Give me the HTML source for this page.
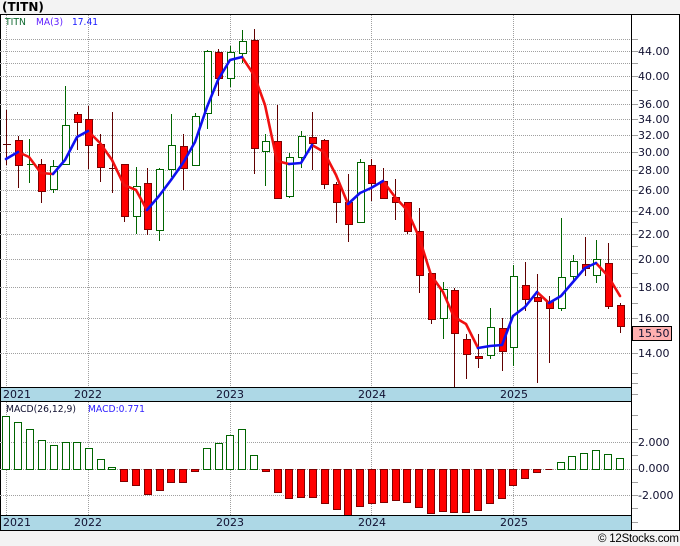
<!DOCTYPE html>
<html><head><meta charset="utf-8"><style>
html,body{margin:0;padding:0;background:#f3f3f3}
svg{display:block}
text{font-family:"DejaVu Sans","Liberation Sans",sans-serif;font-size:11px;fill:#101030}
.s{font-size:9.5px}
.g{fill:none;stroke:#a0a0a0;stroke-width:1;stroke-dasharray:1 1;shape-rendering:crispEdges}
</style></head><body>
<svg width="680" height="546" viewBox="0 0 680 546" xmlns="http://www.w3.org/2000/svg">
<rect width="680" height="546" fill="#f3f3f3"/>
<rect x="0" y="14" width="680" height="517" fill="#fff"/>
<!-- year bars -->
<rect x="1" y="388" width="630" height="13" fill="#add8e6"/>
<rect x="1" y="516" width="630" height="14" fill="#add8e6"/>
<!-- grid -->
<path class="g" d="M1 39.5H631M1 51.5H631M1 63.5H631M1 76.5H631M1 90.5H631M1 104.5H631M1 119.5H631M1 135.5H631M1 152.5H631M1 170.5H631M1 190.5H631M1 211.5H631M1 234.5H631M1 259.5H631M1 287.5H631M1 318.5H631M1 353.5H631M1 442.5H631M1 469.5H631M1 495.5H631"/>
<path class="g" d="M6.5 15V387M88.5 15V387M230.5 15V387M371.5 15V387M513.5 15V387M6.5 402V515M88.5 402V515M230.5 402V515M371.5 402V515M513.5 402V515"/>
<!-- ticks -->
<path fill="none" stroke="#a0a0a0" shape-rendering="crispEdges" d="M632 39.5h6M632 51.5h6M632 63.5h6M632 76.5h6M632 90.5h6M632 104.5h6M632 119.5h6M632 135.5h6M632 152.5h6M632 170.5h6M632 190.5h6M632 211.5h6M632 222.5h6M632 234.5h6M632 246.5h6M632 259.5h6M632 273.5h6M632 287.5h6M632 303.5h6M632 318.5h6M632 340.5h6M632 353.5h6M632 373.5h6M632 383.5h6M632 394.5h6M632 415.5h6M632 429.5h6M632 442.5h6M632 455.5h6M632 469.5h6M632 482.5h6M632 495.5h6M632 508.5h6M632 522.5h6"/>
<!-- wicks -->
<path fill="none" stroke="#600000" shape-rendering="crispEdges" d="M6.5 110V165M18.5 136V188M41.5 159V203M77.5 112V150M88.5 106V169M100.5 134V182M112.5 112V193M124.5 164V222M147.5 168V235M183.5 134V190M218.5 49V96M254.5 29V174M277.5 105V199M312.5 112V170M324.5 139V189M336.5 182V223M348.5 174V242M371.5 159V201M383.5 168V198M395.5 179V220M407.5 202V234M419.5 208V293M431.5 273V324M454.5 288V387M466.5 334V379M478.5 334V368M502.5 318V371M525.5 262V311M537.5 274V383M549.5 296V363M585.5 237V276M608.5 243V309M620.5 303V333M3 144.5h8M109 168.5h7"/>
<path fill="none" stroke="#006400" shape-rendering="crispEdges" d="M29.5 139V183M53.5 160V193M65.5 86V165M136.5 167V234M159.5 168V241M171.5 114V177M195.5 113V166M207.5 50V129M230.5 46V87M242.5 30V63M265.5 134V186M289.5 153V198M301.5 131V168M360.5 159V222M443.5 282V339M490.5 308V359M513.5 265V366M561.5 218V311M573.5 255V280M596.5 240V283M27 164.5h7"/>
<!-- green bodies -->
<path fill="#fff" stroke="#006400" shape-rendering="crispEdges" d="M50.5 166.5h7V189.5h-7zM62.5 125.5h7V164.5h-7zM133.5 186.5h7V216.5h-7zM156.5 169.5h7V230.5h-7zM168.5 145.5h7V169.5h-7zM192.5 116.5h7V165.5h-7zM204.5 51.5h7V113.5h-7zM227.5 52.5h7V78.5h-7zM239.5 41.5h7V53.5h-7zM262.5 141.5h7V151.5h-7zM286.5 157.5h7V196.5h-7zM298.5 136.5h7V157.5h-7zM357.5 162.5h7V222.5h-7zM440.5 289.5h7V318.5h-7zM487.5 327.5h7V355.5h-7zM510.5 276.5h7V347.5h-7zM558.5 277.5h7V308.5h-7zM570.5 261.5h7V276.5h-7zM593.5 259.5h7V275.5h-7z"/>
<!-- red bodies -->
<path fill="#f00" stroke="#800000" shape-rendering="crispEdges" d="M15.5 140.5h7V165.5h-7zM38.5 164.5h7V191.5h-7zM74.5 114.5h7V122.5h-7zM85.5 119.5h7V145.5h-7zM97.5 144.5h7V167.5h-7zM121.5 164.5h7V216.5h-7zM144.5 183.5h7V229.5h-7zM180.5 146.5h7V168.5h-7zM215.5 52.5h7V78.5h-7zM251.5 40.5h7V148.5h-7zM274.5 141.5h7V198.5h-7zM309.5 137.5h7V143.5h-7zM321.5 140.5h7V184.5h-7zM333.5 184.5h7V202.5h-7zM345.5 202.5h7V224.5h-7zM368.5 165.5h7V183.5h-7zM380.5 181.5h7V198.5h-7zM392.5 197.5h7V202.5h-7zM404.5 202.5h7V231.5h-7zM416.5 231.5h7V275.5h-7zM428.5 273.5h7V319.5h-7zM451.5 290.5h7V333.5h-7zM463.5 339.5h7V354.5h-7zM475.5 356.5h7V358.5h-7zM499.5 328.5h7V351.5h-7zM522.5 285.5h7V299.5h-7zM534.5 297.5h7V301.5h-7zM546.5 301.5h7V308.5h-7zM582.5 264.5h7V268.5h-7zM605.5 263.5h7V306.5h-7zM617.5 305.5h7V326.5h-7z"/>
<!-- MA line -->
<g fill="none" stroke-width="2.6" stroke-linejoin="round" stroke-linecap="round">
<g stroke="#f01010">
<path d="M18 152L29 157L41 173L53 174"/>
<path d="M88 131L100 143L112 160L124 185L136 190L147 210"/>
<path d="M242 57L254 75L265 105L277 161L289 164"/>
<path d="M312 145L324 152L336 175L348 204"/>
<path d="M383 181L395 197L407 210L419 237L431 275L443 292L454 317L466 324L478 348"/>
<path d="M537 292L549 303"/>
<path d="M596 263L608 276L620 296"/>
</g>
<g stroke="#1010f0">
<path d="M6 159L18 152"/>
<path d="M53 174L65 160L77 137L88 131"/>
<path d="M147 210L159 196L171 180L183 163L195 142L207 107L218 80L230 60L242 57"/>
<path d="M289 164L301 163L312 145"/>
<path d="M348 204L360 193L371 188L383 181"/>
<path d="M478 348L490 346L502 345L513 316L525 307L537 292"/>
<path d="M549 303L561 296L573 282L585 268L596 263"/>
</g>
</g>
<!-- MACD bars -->
<path fill="#fff" stroke="#006400" shape-rendering="crispEdges" d="M2.5 416.5h7V469.5h-7zM14.5 422.5h7V469.5h-7zM26.5 429.5h7V469.5h-7zM38.5 440.5h7V469.5h-7zM50.5 445.5h7V469.5h-7zM62.5 442.5h7V469.5h-7zM73.5 442.5h7V469.5h-7zM85.5 448.5h7V469.5h-7zM97.5 459.5h7V469.5h-7zM108.5 467.5h7V469.5h-7zM203.5 448.5h7V469.5h-7zM215.5 443.5h7V469.5h-7zM226.5 435.5h7V469.5h-7zM238.5 429.5h7V469.5h-7zM250.5 455.5h7V469.5h-7zM557.5 462.5h7V469.5h-7zM568.5 456.5h7V469.5h-7zM580.5 453.5h7V469.5h-7zM592.5 450.5h7V469.5h-7zM604.5 454.5h7V469.5h-7zM616.5 458.5h7V469.5h-7z"/>
<path fill="#f00" stroke="#800000" shape-rendering="crispEdges" d="M120.5 469.5h7V481.5h-7zM132.5 469.5h7V485.5h-7zM144.5 469.5h7V494.5h-7zM156.5 469.5h7V490.5h-7zM167.5 469.5h7V482.5h-7zM179.5 469.5h7V482.5h-7zM191.5 469.5h7V471.5h-7zM262.5 469.5h7V471.5h-7zM274.5 469.5h7V492.5h-7zM285.5 469.5h7V498.5h-7zM297.5 469.5h7V497.5h-7zM309.5 469.5h7V497.5h-7zM321.5 469.5h7V503.5h-7zM333.5 469.5h7V509.5h-7zM344.5 469.5h7V515.5h-7zM356.5 469.5h7V506.5h-7zM368.5 469.5h7V503.5h-7zM380.5 469.5h7V502.5h-7zM392.5 469.5h7V500.5h-7zM403.5 469.5h7V502.5h-7zM415.5 469.5h7V507.5h-7zM427.5 469.5h7V513.5h-7zM439.5 469.5h7V511.5h-7zM450.5 469.5h7V512.5h-7zM462.5 469.5h7V512.5h-7zM474.5 469.5h7V510.5h-7zM486.5 469.5h7V503.5h-7zM498.5 469.5h7V498.5h-7zM509.5 469.5h7V485.5h-7zM521.5 469.5h7V478.5h-7zM533.5 469.5h7V472.5h-7zM545.5 469.5h7V469.5h-7z"/>
<!-- frame -->
<path fill="none" stroke="#000" shape-rendering="crispEdges" d="M0 14.5H680M0 387.5H632M0 401.5H632M0 515.5H632M0 530.5H680M.5 14V531M631.5 14V531M679.5 14V531"/>
<!-- left border gaps at grid rows -->
<path fill="none" stroke="#c8c8c8" shape-rendering="crispEdges" d="M0 39.5h1M0 51.5h1M0 63.5h1M0 76.5h1M0 90.5h1M0 104.5h1M0 119.5h1M0 135.5h1M0 152.5h1M0 170.5h1M0 190.5h1M0 211.5h1M0 234.5h1M0 259.5h1M0 287.5h1M0 318.5h1M0 353.5h1M0 442.5h1M0 469.5h1M0 495.5h1"/>
<!-- price box -->
<rect x="632.5" y="326.5" width="39" height="14" fill="#ffb0b0" stroke="#000" shape-rendering="crispEdges"/>
<!-- text -->
<text x="2" y="11" style="font-size:12px;font-weight:bold;fill:#000">(TITN)</text>
<text class="s" x="5" y="25" textLength="21" lengthAdjust="spacingAndGlyphs" style="fill:#106a30">TITN</text>
<text class="s" x="36" y="25" textLength="27" lengthAdjust="spacingAndGlyphs" style="fill:#6020ff">MA(3)</text>
<text class="s" x="72" y="25" textLength="26" lengthAdjust="spacingAndGlyphs" style="fill:#1818ff">17.41</text>
<text class="s" x="6" y="412" textLength="70" lengthAdjust="spacingAndGlyphs" style="fill:#101030">MACD(26,12,9)</text>
<text class="s" x="88" y="412" textLength="57" lengthAdjust="spacingAndGlyphs" style="fill:#3020ff">MACD:0.771</text>
<text x="638" y="55">44.00</text>
<text x="638" y="80">40.00</text>
<text x="638" y="108">36.00</text>
<text x="638" y="123">34.00</text>
<text x="638" y="139">32.00</text>
<text x="638" y="156">30.00</text>
<text x="638" y="174">28.00</text>
<text x="638" y="194">26.00</text>
<text x="638" y="215">24.00</text>
<text x="638" y="238">22.00</text>
<text x="638" y="263">20.00</text>
<text x="638" y="291">18.00</text>
<text x="638" y="322">16.00</text>
<text x="638" y="337">15.50</text>
<text x="638" y="357">14.00</text>
<text x="638" y="446">2.000</text>
<text x="638" y="472">0.000</text>
<text x="638" y="499">-2.000</text>
<g>
<text x="3" y="398">2021</text><text x="74" y="398">2022</text><text x="216" y="398">2023</text><text x="358" y="398">2024</text><text x="500" y="398">2025</text>
<text x="3" y="526">2021</text><text x="74" y="526">2022</text><text x="216" y="526">2023</text><text x="358" y="526">2024</text><text x="500" y="526">2025</text>
</g>
<text x="598" y="542" textLength="81" lengthAdjust="spacing" style="font-family:'Liberation Sans',sans-serif;font-size:11.5px;fill:#000">© 12Stocks.com</text>
</svg>
</body></html>
